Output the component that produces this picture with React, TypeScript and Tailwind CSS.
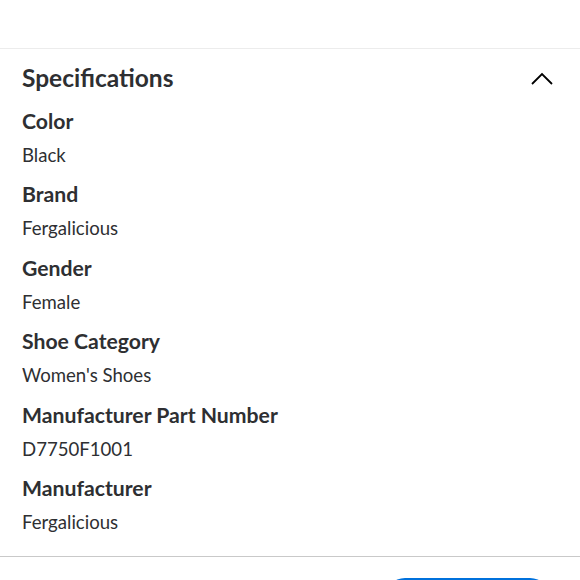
import React, { useState } from 'react';

const specs = [
  { label: 'Color', value: 'Black' },
  { label: 'Brand', value: 'Fergalicious' },
  { label: 'Gender', value: 'Female' },
  { label: 'Shoe Category', value: "Women's Shoes" },
  { label: 'Manufacturer Part Number', value: 'D7750F1001' },
  { label: 'Manufacturer', value: 'Fergalicious' },
];

export default function App() {
  const [open, setOpen] = useState(true);

  return (
    <div className="w-[580px] h-[580px] overflow-hidden bg-white text-[#2e2f32]" style={{ fontFamily: 'Lato, "Noto Sans", sans-serif' }}>
      <div className="h-[48px]" />
      <section className="border-t border-[#ececec] border-b border-b-[#c9c9c9] px-[22px] pt-[13px] pb-[20px]">
        <button className="w-full flex items-center justify-between" onClick={() => setOpen(!open)}>
          <h2 className="text-[24.5px] leading-[32px] font-bold">Specifications</h2>
          <svg width="22" height="13" viewBox="0 0 22 13" className="mr-[5px]" fill="none" stroke="#000" strokeWidth="1.8">
            <path d="M1 12 L11 2 L21 12" />
          </svg>
        </button>
        {open && (
          <div className="mt-[13px] flex flex-col gap-[11.4px]">
            {specs.map((s) => (
              <div key={s.label}>
                <div className="text-[21.2px] leading-[28px] font-bold">{s.label}</div>
                <div className="mt-[6px] text-[18.6px] leading-[28px]">{s.value}</div>
              </div>
            ))}
          </div>
        )}
      </section>
      <div className="flex justify-end pr-[30px] pt-[21px]">
        <button className="w-[165px] h-[40px] rounded-full bg-[#0071dc] text-white" />
      </div>
    </div>
  );
}
